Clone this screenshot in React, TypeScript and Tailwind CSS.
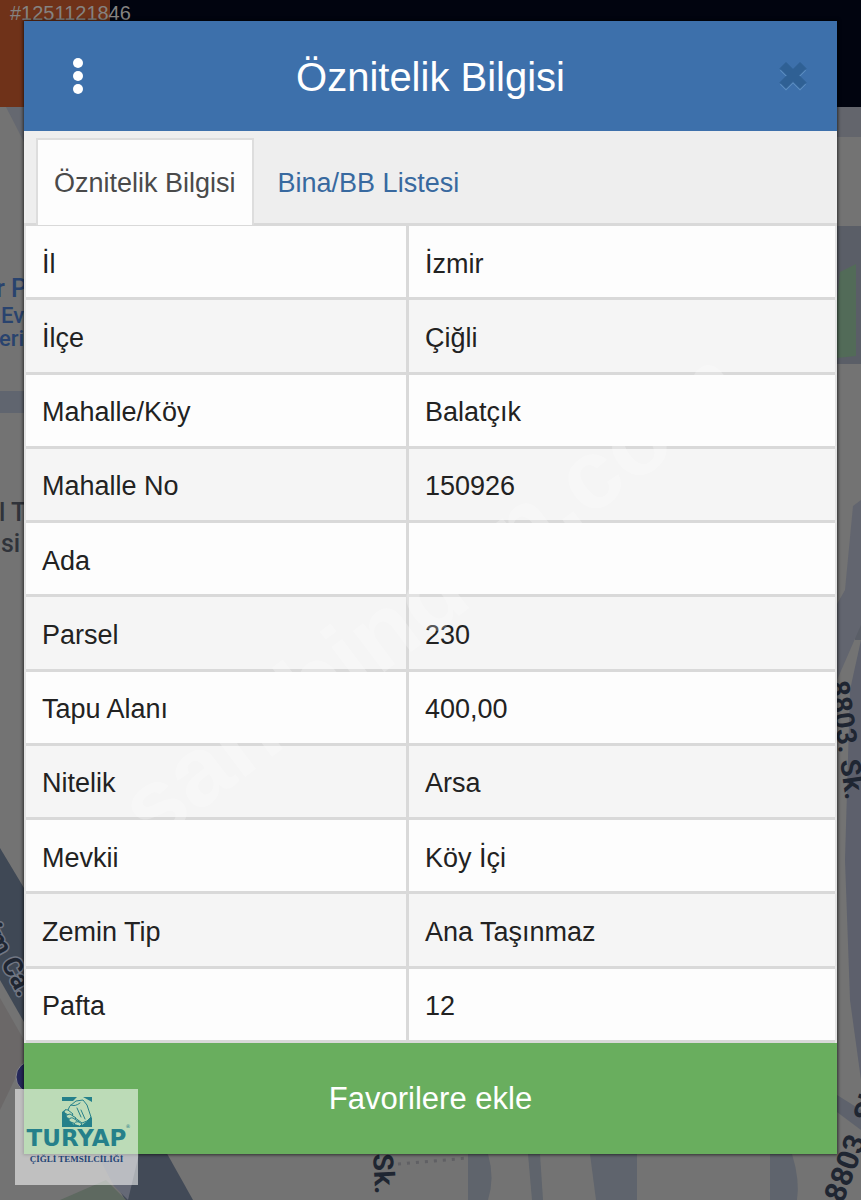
import { useState } from 'react';

const attributes = [
  { label: 'İl', value: 'İzmir' },
  { label: 'İlçe', value: 'Çiğli' },
  { label: 'Mahalle/Köy', value: 'Balatçık' },
  { label: 'Mahalle No', value: '150926' },
  { label: 'Ada', value: '' },
  { label: 'Parsel', value: '230' },
  { label: 'Tapu Alanı', value: '400,00' },
  { label: 'Nitelik', value: 'Arsa' },
  { label: 'Mevkii', value: 'Köy İçi' },
  { label: 'Zemin Tip', value: 'Ana Taşınmaz' },
  { label: 'Pafta', value: '12' },
];

const tabs = ['Öznitelik Bilgisi', 'Bina/BB Listesi'];

// Dimmed map behind the dialog
function MapBackdrop() {
  return (
    <svg
      viewBox="0 0 861 1200"
      preserveAspectRatio="xMidYMin slice"
      className="absolute inset-0 h-full w-full"
      aria-hidden="true"
    >
      <rect width="861" height="1200" fill="#737373" />
      {/* left edge */}
      <path d="M6 107H24V142Z" fill="#656870" />
      <rect y="391" width="24" height="22" fill="#60656f" />
      <path d="M0 848L24 888V1022L0 980Z" fill="#3f4855" />
      <path d="M0 998L24 1040V1060L0 1110Z" fill="#6b6868" />
      <circle cx="32" cy="1077" r="16" fill="#25285a" stroke="#85858a" strokeWidth="1" />
      {/* right edge */}
      <path d="M837 107H861V137H837Z" fill="#63656c" />
      <path d="M837 226H861V640H855V560L861 500V364H837Z" fill="#5a5e67" />
      <path d="M840 272L856 264V356L837 358V300Z" fill="#526b58" />
      <path d="M861 500L853 506L845 590L837 604V680L861 625Z" fill="#62656f" />
      <path d="M850 690L861 640V1080L850 1000L845 860Z" fill="#5d606c" />
      <path d="M837 1095L861 1110V1130L837 1112Z" fill="#5e626c" />
      {/* bottom edge */}
      <path d="M98 1150H165L193 1200H125Z" fill="#424a57" />
      <path d="M95 1150H140L128 1200L114 1186Z" fill="#656976" />
      <path d="M60 1200L106 1180L126 1200Z" fill="#5e6960" />
      <path d="M468 1154H488Q495 1178 488 1200H468Z" fill="#5f646c" />
      <path d="M528 1154H540L543 1200H532Z" fill="#5f646c" />
      <path d="M590 1154H637V1200H596Z" fill="#5f646d" />
      <path d="M770 1154H792Q800 1180 797 1200H770Z" fill="#5f646d" />
      <path d="M398 1164L468 1158" stroke="#606064" strokeWidth="3" strokeDasharray="3 6" />
      <g fontFamily="'Roboto', sans-serif" fontWeight="500" fill="#29436e">
        <text x="-4" y="297" fontSize="25">r P</text>
        <text x="1" y="323" fontSize="22">Ev</text>
        <text x="-1" y="346" fontSize="22">eri</text>
        <g fill="#30333a">
          <text x="-1" y="521" fontSize="25">l T</text>
          <text x="1" y="552" fontSize="25">si</text>
        </g>
        <g fill="#1f2632" fontWeight="700">
          <text
            fontSize="27"
            transform="translate(-17 930) rotate(62)"
            stroke="#717784"
            strokeWidth="3"
            paintOrder="stroke"
          >
            im Ca.
          </text>
          <text fontSize="28" transform="translate(829 682) rotate(82)">8803. Sk.</text>
          <text fontSize="28" transform="translate(373 1154) rotate(87)">Sk.</text>
          <text fontSize="30" transform="translate(843 1204) rotate(-70)">8803. Sk.</text>
        </g>
      </g>
      <rect width="110" height="107" fill="#6f3219" />
      <rect x="110" width="751" height="107" fill="#01040f" />
    </svg>
  );
}

function CloseIcon() {
  const cross = 'M7 1.5L14 8.5L21 1.5L27 7.5L20 14.5L27 21.5L21 27.5L14 20.5L7 27.5L1 21.5L8 14.5L1 7.5Z';
  return (
    <svg viewBox="0 0 28 30" className="h-[30px] w-7" aria-hidden="true">
      <path d={cross} transform="translate(0 2)" fill="#5d8ec2" strokeLinejoin="round" />
      <path d={cross} fill="#2f6094" stroke="#2f6094" strokeLinejoin="round" />
    </svg>
  );
}

function AgencyBadge() {
  return (
    <div className="absolute bottom-[15px] left-[15px] flex h-24 w-[123px] flex-col items-center bg-white/55 pt-2">
      <svg viewBox="0 0 30 30" className="h-[30px] w-[30px]" aria-hidden="true">
        <path d="M0 0H15L11 4H0Z M21 0H30V5Z M0 15L4 12L5 20L12 28L20 28L25 24L26 15L30 21V30H0Z" fill="#25808a" />
        <g fill="#bfdcb9" stroke="#25808a" strokeWidth="1" strokeLinejoin="round" strokeLinecap="round">
          <path d="M8 9L14 4L21 3L25 8L29 20L25 24L20 26L12 20L6 14Z" />
          <path d="M2 15Q2 12 6 13L11 17L9 20L6 18Z" />
          <path d="M4 20Q4 17 8 17L14 21L12 23Z" />
          <path d="M7 24Q7 20 11 21L17 25L15 27Z" />
          <path d="M12 27Q13 24 17 25L20 27L18 29Z" />
          <path d="M15 11L19 20M19 13L23 22M9 8Q13 10 18 6" fill="none" />
        </g>
      </svg>
      <div className="relative font-['DejaVu_Sans',sans-serif] text-[23px] leading-[22px] font-bold text-[#25808a]">
        TURYAP
        <span className="absolute -top-1 -right-1 text-[5px] leading-[6px] font-normal">®</span>
      </div>
      <div className="mt-1 font-['Liberation_Serif',serif] text-[9px] leading-3 font-bold whitespace-nowrap text-[#1f4475]">
        ÇİĞLİ TEMSİLCİLİĞİ
      </div>
    </div>
  );
}

export default function App() {
  const [activeTab, setActiveTab] = useState(0);

  return (
    <div
      lang="tr"
      className="relative min-h-screen overflow-hidden bg-[#737373] px-6 pt-[21px] pb-[46px] font-['Liberation_Sans',Arial,sans-serif]"
    >
      <MapBackdrop />
      <span className="absolute top-[3px] left-[10px] text-[20px] leading-5 text-[#858381]">#1251121846</span>

      <section aria-labelledby="dialog-title" className="relative shadow-[0_0_3px_1px_rgba(0,0,0,0.6)]">
        <header className="flex h-[110px] items-center justify-between bg-[#3d70ab] px-[30px]">
          <button type="button" aria-label="Menü" className="flex w-12 justify-center">
            <svg viewBox="0 0 12 38" className="h-[38px] w-3" fill="#fff" aria-hidden="true">
              <circle cx="6" cy="6" r="5" />
              <circle cx="6" cy="19" r="5" />
              <circle cx="6" cy="32" r="5" />
            </svg>
          </button>
          <h1 id="dialog-title" className="pt-px text-[40px] leading-[44px] text-white">
            Öznitelik Bilgisi
          </h1>
          <button type="button" aria-label="Kapat" className="flex w-12 justify-end">
            <CloseIcon />
          </button>
        </header>

        <div role="tablist" className="flex h-[95px] border-b-3 border-[#d9d9d9] bg-[#eeeeee] pt-[7px] pl-3">
          {tabs.map((tab, index) => (
            <button
              key={tab}
              type="button"
              role="tab"
              aria-selected={activeTab === index}
              onClick={() => setActiveTab(index)}
              className={
                activeTab === index
                  ? '-mb-[2px] border-2 border-b-0 border-[#dddddd] bg-[#fdfdfd] px-4 text-[27px] leading-8 text-[#4a4a4a]'
                  : 'px-6 pt-1 text-[27px] leading-8 text-[#38699f]'
              }
            >
              {tab}
            </button>
          ))}
        </div>

        <div className="relative border-x-2 border-[#e4e4e4] bg-[#fdfdfd]">
          <table className="h-[817px] w-full table-fixed border-separate border-spacing-0 text-left text-[27px] leading-8 text-[#222222]">
            <colgroup>
              <col className="w-[383px]" />
              <col />
            </colgroup>
            <tbody>
              {attributes.map((row) => (
                <tr key={row.label} className="even:bg-[#f5f5f5]">
                  <th scope="row" className="border-r-3 border-b-3 border-[#d9d9d9] pt-1 pl-4 font-normal">
                    {row.label}
                  </th>
                  <td className="border-b-3 border-[#d9d9d9] pt-1 pl-4">{row.value}</td>
                </tr>
              ))}
            </tbody>
          </table>
          <div
            aria-hidden="true"
            className="pointer-events-none absolute inset-0 flex items-center justify-center overflow-hidden pb-20"
          >
            <span className="-rotate-[37deg] text-[98px] leading-none font-bold whitespace-nowrap text-white/25">
              sahibinden.com
            </span>
          </div>
        </div>

        <button
          type="button"
          className="flex h-[111px] w-full items-center justify-center bg-[#69ae5e] text-[31px] leading-9 text-white"
        >
          Favorilere ekle
        </button>
      </section>

      <AgencyBadge />
    </div>
  );
}
